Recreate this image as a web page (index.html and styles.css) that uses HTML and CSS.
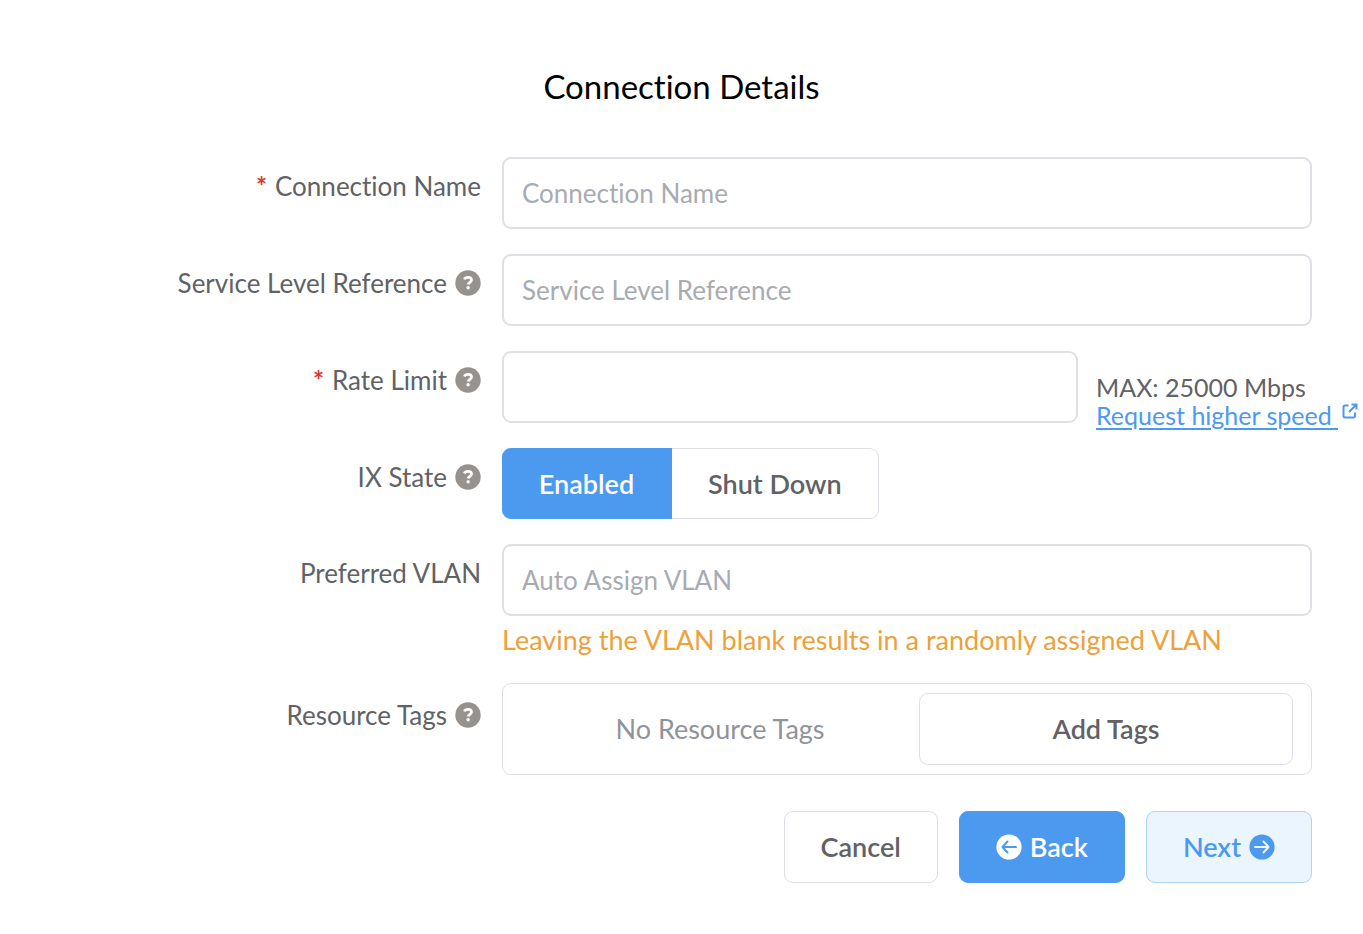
FILE: index.html
```html
<!DOCTYPE html>
<html lang="en">
<head>
<meta charset="utf-8">
<title>Connection Details</title>
<link rel="stylesheet" href="styles.css">
</head>
<body>
<svg class="sprite" aria-hidden="true">
  <symbol id="help" viewBox="0 0 26 26"><circle cx="13" cy="13" r="12.7" fill="#98928f"/><path d="M9.400 9.600C10 8 11.200 7.400 13 7.400c2.200 0 3.500 1 3.500 2.700 0 2.200-3.100 2.200-3.300 4.400" fill="none" stroke="#fff" stroke-width="2.800"/><circle cx="13.100" cy="17.800" r="1.700" fill="#fff"/></symbol>
</svg>
<form class="form">
  <h1 class="title">Connection Details</h1>
  <div class="row">
    <label class="label" for="name"><span class="star">*</span> Connection Name</label>
    <input class="input" id="name" type="text" placeholder="Connection Name">
  </div>
  <div class="row">
    <label class="label" for="service">Service Level Reference <svg class="help"><use href="#help"/></svg></label>
    <input class="input" id="service" type="text" placeholder="Service Level Reference">
  </div>
  <div class="row">
    <label class="label" for="rate"><span class="star">*</span> Rate Limit <svg class="help"><use href="#help"/></svg></label>
    <div class="rate">
      <input class="input" id="rate" type="text">
      <div class="limit">
        <div>MAX: 25000 Mbps</div>
        <div class="request"><a class="link" href="#">Request higher speed&nbsp;</a><svg class="external" viewBox="0 0 16 16"><path d="M6.500 2.500H3A1.500 1.500 0 0 0 1.500 4v9A1.500 1.500 0 0 0 3 14.500h8.500A1.500 1.500 0 0 0 13 13V9.500M9.500 1.500h5v5M14.500 1.500 7 9"/></svg></div>
      </div>
    </div>
  </div>
  <div class="row">
    <span class="label" id="state">IX State <svg class="help"><use href="#help"/></svg></span>
    <div class="toggle" role="group" aria-labelledby="state"><button class="choice active" type="button">Enabled</button><button class="choice" type="button">Shut Down</button></div>
  </div>
  <div class="row">
    <label class="label" for="vlan">Preferred VLAN</label>
    <div>
      <input class="input" id="vlan" type="text" placeholder="Auto Assign VLAN">
      <p class="hint">Leaving the VLAN blank results in a randomly assigned VLAN</p>
    </div>
  </div>
  <div class="row">
    <span class="label tall">Resource Tags <svg class="help"><use href="#help"/></svg></span>
    <div class="tags"><span class="empty">No Resource Tags</span><button class="button" type="button">Add Tags</button></div>
  </div>
  <div class="actions">
    <button class="button" type="button">Cancel</button>
    <button class="button primary" type="button"><svg class="arrow" viewBox="0 0 26 26"><circle cx="13" cy="13" r="12.600" fill="#fff"/><path d="M20 13H6.500m5-5.500L6.500 13l5 5.500" stroke="#4c9af0"/></svg>Back</button>
    <button class="button next" type="button">Next<svg class="arrow" viewBox="0 0 26 26"><circle cx="13" cy="13" r="12.600" fill="#4c9af0"/><path d="M6 13h13.500m-5-5.500L19.500 13l-5 5.500" stroke="#eaf5fe"/></svg></button>
  </div>
</form>
</body>
</html>
```
FILE: styles.css
```css
* { box-sizing: border-box; }
body { margin: 0; background: #fff; color: #606266; font: 26px/36px Lato, "Open Sans", sans-serif; font-variant-ligatures: none; }
.sprite { position: absolute; width: 0; height: 0; }
.form { padding: 64px 51px 0 0; }
.title { margin: 0 0 49px 51px; text-align: center; color: #000; font-size: 33px; line-height: 44px; font-weight: 400; }
.row { display: grid; grid-template-columns: 481px minmax(0, 1fr); column-gap: 21px; margin-bottom: 25px; }
.label { display: flex; justify-content: flex-end; align-items: center; gap: 8px; height: 58px; white-space: nowrap; }
.tall { height: 64px; }
.star { color: #d93a32; font-weight: 700; }
.help { width: 26px; height: 26px; }
.input { display: block; width: 100%; height: 72px; padding: 0 18px; border: 2px solid #dfe0e6; border-radius: 9px; background: #fff; color: #606266; font: inherit; }
.input::placeholder { color: #a8abb2; opacity: 1; }
.rate { display: grid; grid-template-columns: minmax(0, 1fr) 216px; column-gap: 18px; height: 72px; }
.limit { padding-top: 22px; font-size: 25px; line-height: 28px; white-space: nowrap; }
.request { display: flex; gap: 4px; }
.link { color: #4c9af0; text-underline-offset: 3px; }
.external { flex: none; width: 16px; height: 16px; margin-top: 2px; fill: none; stroke: #4c9af0; stroke-width: 2; }
.toggle { display: flex; height: 71px; }
.choice { min-width: 205px; padding: 0 36px; border: 1px solid #dcdfe6; border-left: 0; border-radius: 0 9px 9px 0; background: #fff; color: #606266; font: inherit; font-size: 27px; font-weight: 600; }
.choice.active { min-width: 170px; border-color: #4c9af0; border-radius: 9px 0 0 9px; background: #4c9af0; color: #fff; }
.hint { margin: 6px 0 0; color: #eda13a; font-size: 27px; }
.tags { display: grid; grid-template-columns: minmax(0, 1fr) 374px; align-items: center; height: 92px; padding: 0 18px; border: 1px solid #dcdfe6; border-radius: 9px; }
.empty { text-align: center; color: #909399; font-size: 27px; }
.button { display: flex; align-items: center; justify-content: center; gap: 8px; height: 72px; padding: 0 36px; border: 1px solid #dcdfe6; border-radius: 9px; background: #fff; color: #606266; font: inherit; font-size: 27px; font-weight: 600; }
.actions { display: flex; justify-content: flex-end; gap: 21px; margin-top: 36px; }
.primary { border-color: #4c9af0; background: #4c9af0; color: #fff; }
.next { border-color: #add4f9; background: #eaf5fe; color: #4c9af0; }
.arrow { width: 26px; height: 26px; fill: none; stroke-width: 2; stroke-linecap: round; stroke-linejoin: round; }
```
